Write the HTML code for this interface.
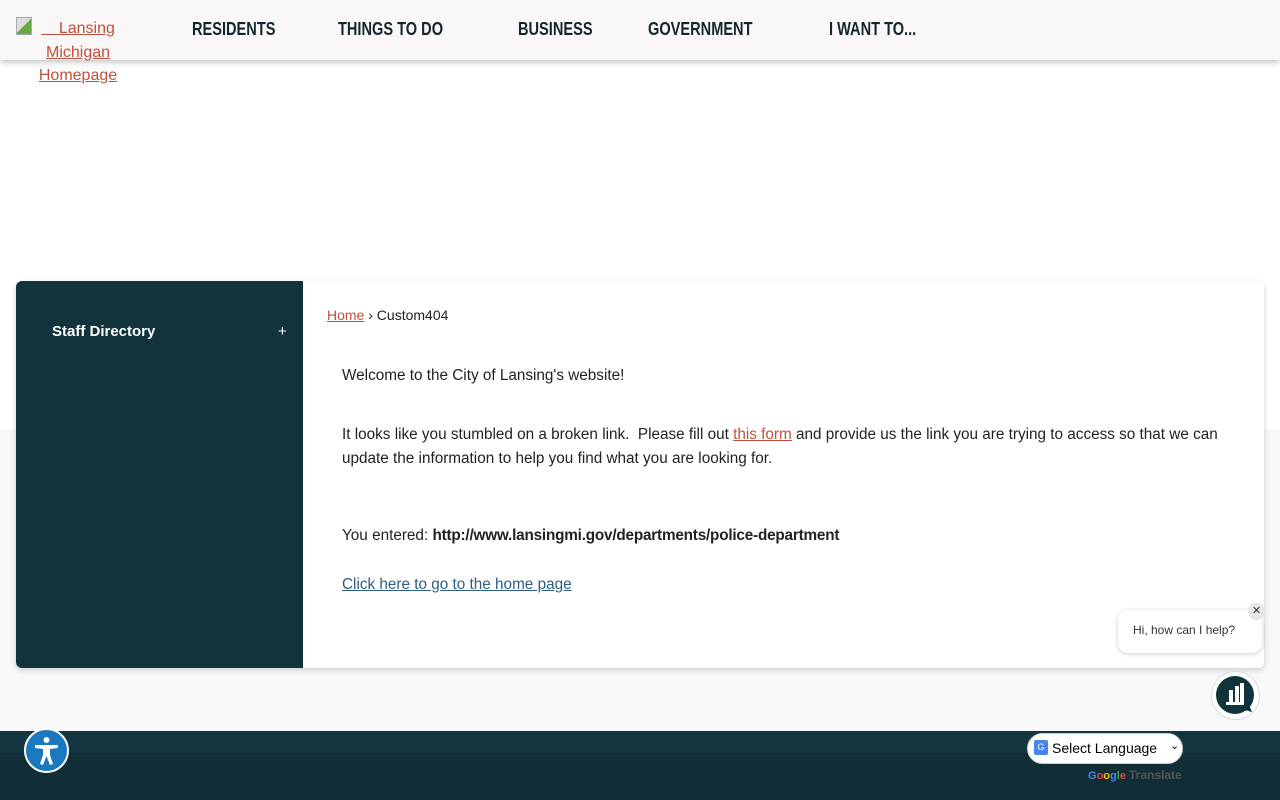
<!DOCTYPE html>
<html><head><meta charset="utf-8">
<style>
*{margin:0;padding:0;box-sizing:border-box}
body{width:1280px;height:800px;overflow:hidden;position:relative;background:#fff;font-family:"Liberation Sans",sans-serif;color:#222}
.a{position:absolute;white-space:nowrap}
#hdr{position:absolute;left:0;top:0;width:1280px;height:60px;background:#f9f7f7;box-shadow:0 2px 6px rgba(0,0,0,.25);z-index:2}
.nav{position:absolute;top:19px;font-weight:bold;font-size:18px;color:#14262d;transform:scaleX(0.81);transform-origin:0 0}
.logo{position:absolute;left:16px;top:17px;width:124px;text-align:center;font-size:16px;line-height:23.5px;color:#c0503c;text-decoration:underline;z-index:3}
#gray{position:absolute;left:0;top:430px;width:1280px;height:301px;background:#f7f9f9}
#foot{position:absolute;left:0;top:731px;width:1280px;height:69px;background:#112e37}
#box{position:absolute;left:16px;top:281px;width:1248px;height:387px;background:#fff;border-radius:6px;box-shadow:0 2px 6px rgba(0,0,0,.18);overflow:hidden}
#side{position:absolute;left:0;top:0;width:287px;height:387px;background:#11333b}
.t{font-size:15.3px;color:#222}
</style></head><body>
<div id="hdr">
<div class="nav" style="left:192px">RESIDENTS</div>
<div class="nav" style="left:338px">THINGS TO DO</div>
<div class="nav" style="left:518px">BUSINESS</div>
<div class="nav" style="left:648px">GOVERNMENT</div>
<div class="nav" style="left:829px">I WANT TO...</div>
</div>
<div class="logo"><span style="position:absolute;left:0;top:0;width:16px;height:18px;border:1px solid #aaa;background:linear-gradient(135deg,#ddd 50%,#6a4 50%)"></span>&nbsp;&nbsp;&nbsp;&nbsp;Lansing<br>Michigan<br>Homepage</div>
<div id="gray"></div>
<div id="foot"><div style="height:22px;background:#143640"></div></div>
<div id="box">
<div id="side">
<div class="a" style="left:36px;top:42px;color:#fff;font-size:15px;font-weight:bold">Staff Directory</div>
<div class="a" style="left:262px;top:42px;color:#fff;font-size:15px">+</div>
</div>
<div class="a" style="left:311px;top:26px;font-size:14px"><span style="color:#c0503c;text-decoration:underline">Home</span> › Custom404</div>
<div class="a t" style="left:326px;top:86px">Welcome to the City of Lansing's website!</div>
<div class="a t" style="left:326px;top:145px">It looks like you stumbled on a broken link.&nbsp; Please fill out <span style="color:#c0503c;text-decoration:underline">this form</span> and provide us the link you are trying to access so that we can</div>
<div class="a t" style="left:326px;top:169px">update the information to help you find what you are looking for.</div>
<div class="a t" style="left:326px;top:246px">You entered: <b style="letter-spacing:-0.2px">http://www.lansingmi.gov/departments/police-department</b></div>
<div class="a t" style="left:326px;top:295px;color:#2e5e84;text-decoration:underline">Click here to go to the home page</div>
</div>
<div class="a" style="left:1118px;top:610px;width:144px;height:43px;background:#fff;border-radius:10px;box-shadow:0 1px 5px rgba(0,0,0,.2);font-size:12px;color:#333;padding:13px 0 0 15px">Hi, how can I help?</div>
<div class="a" style="left:1248px;top:603px;width:17px;height:17px;border-radius:50%;background:#e6e6e6;font-size:11px;text-align:center;line-height:17px;color:#333">✕</div>
<div class="a" style="left:1211px;top:671px;width:49px;height:49px;border-radius:50%;background:#fff;border:1px solid #ddd"></div>
<svg class="a" style="left:1214px;top:674px" width="44" height="44" viewBox="0 0 44 44"><circle cx="21" cy="21" r="19" fill="#11333b"/><path d="M31 36 L38 38 L35 31Z" fill="#11333b"/><rect x="15" y="16" width="4" height="12" fill="#fff"/><rect x="21" y="12" width="4" height="16" fill="#fff"/><rect x="26" y="9" width="4" height="19" fill="#fff"/><rect x="12" y="28" width="18" height="3" fill="#fff"/></svg>
<div class="a" style="left:24px;top:728px;width:45px;height:45px;border-radius:50%;background:#1a78bd;border:2px solid #fff"></div>
<svg class="a" style="left:24px;top:728px" width="45" height="45" viewBox="0 0 45 45"><circle cx="22.5" cy="12" r="3" fill="#fff"/><path d="M11 17 L34 17 L34 20 L26 21 L26 27 L29 36 L26 37 L22.5 28 L19 37 L16 36 L19 27 L19 21 L11 20Z" fill="#fff"/></svg>
<div class="a" style="left:1027px;top:733px;width:156px;height:31px;background:#fff;border-radius:16px;border:1px solid #ccc;font-size:14px;color:#000;padding:6px 0 0 24px">Select Language<span style="position:absolute;left:142px;top:5px;font-size:11px">⌄</span></div>
<div class="a" style="left:1034px;top:740px;width:14px;height:15px;background:#4a86e8;border-radius:2px;color:#fff;font-size:9px;text-align:center;line-height:15px">G</div>
<div class="a" style="left:1088px;top:768px;font-size:11px;font-weight:bold"><span style="color:#4285f4">G</span><span style="color:#ea4335">o</span><span style="color:#fbbc05">o</span><span style="color:#4285f4">g</span><span style="color:#34a853">l</span><span style="color:#ea4335">e</span> <span style="color:#555;font-size:12px">Translate</span></div>
</body></html>
